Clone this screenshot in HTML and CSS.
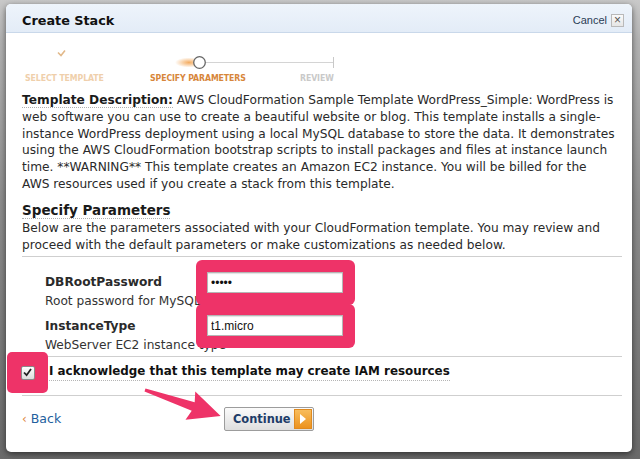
FILE: index.html
```html
<!DOCTYPE html>
<html>
<head>
<meta charset="utf-8">
<link rel="stylesheet" href="styles.css">
</head>
<body>
<div class="backdrop">
  <div class="modal">
    <header class="modal-head">
      <h1 class="title">Create Stack</h1>
      <div class="cancel">Cancel <span class="close-box">×</span></div>
    </header>
    <div class="modal-body">
      <div class="wizard">
        <svg class="track" width="312" height="22" viewBox="0 0 312 22">
          <defs>
            <linearGradient id="done" x1="0" x2="1" y1="0" y2="0">
              <stop offset="0" stop-color="#e9d2b4"/>
              <stop offset="0.8" stop-color="#e4bf92"/>
              <stop offset="1" stop-color="#f0a24a"/>
            </linearGradient>
            <radialGradient id="glow" cx="0.5" cy="0.5" r="0.5">
              <stop offset="0" stop-color="#f2a24e" stop-opacity="0.9"/>
              <stop offset="1" stop-color="#f2a24e" stop-opacity="0"/>
            </radialGradient>
          </defs>
          <path d="M33 4.5 L36 7.5 L40 2.5" fill="none" stroke="#e2b98a" stroke-width="1.6"/>
          <line x1="0" y1="14.5" x2="168" y2="14.5" stroke="url(#done)" stroke-width="1.5"/>
          <ellipse cx="164" cy="14.5" rx="14" ry="5" fill="url(#glow)"/>
          <line x1="181" y1="14.5" x2="308" y2="14.5" stroke="#d4d4d4" stroke-width="1.2"/>
          <line x1="308.5" y1="9" x2="308.5" y2="20" stroke="#c8c8c8" stroke-width="1"/>
          <circle cx="174.5" cy="14.5" r="5.8" fill="#fff" stroke="#666" stroke-width="1.3"/>
        </svg>
        <div class="steps">
          <span class="step done">SELECT TEMPLATE</span>
          <span class="step current">SPECIFY PARAMETERS</span>
          <span class="step todo">REVIEW</span>
        </div>
      </div>

      <p class="desc"><span class="term">Template Description:</span> AWS CloudFormation Sample Template WordPress_Simple: WordPress is web software you can use to create a beautiful website or blog. This template installs a single-instance WordPress deployment using a local MySQL database to store the data. It demonstrates using the AWS CloudFormation bootstrap scripts to install packages and files at instance launch time. **WARNING** This template creates an Amazon EC2 instance. You will be billed for the<br>AWS resources used if you create a stack from this template.</p>

      <h2 class="section"><span class="term">Specify Parameters</span></h2>
      <p class="intro">Below are the parameters associated with your CloudFormation template. You may review and proceed with the default parameters or make customizations as needed below.</p>

      <div class="rule"></div>

      <div class="params">
        <div class="param">
          <div class="param-text">
            <div class="param-name">DBRootPassword</div>
            <div class="param-help">Root password for MySQL</div>
          </div>
          <input class="field" type="password" value="admin">
        </div>
        <div class="param">
          <div class="param-text">
            <div class="param-name">InstanceType</div>
            <div class="param-help">WebServer EC2 instance type</div>
          </div>
          <input class="field" type="text" value="t1.micro">
        </div>
      </div>

      <div class="rule"></div>

      <label class="ack">
        <span class="check"><svg width="9" height="9" viewBox="0 0 9 9"><path d="M1 4.5 L3.6 7.2 L8 1" fill="none" stroke="#222" stroke-width="1.8"/></svg></span>
        <span class="ack-text">I acknowledge that this template may create IAM resources</span>
      </label>

      <div class="rule"></div>

      <div class="actions">
        <a class="back"><span class="chev">‹</span> Back</a>
        <button class="continue">Continue <span class="go"><svg width="8" height="10" viewBox="0 0 8 10"><path d="M1 0 L7 5 L1 10 Z" fill="#fff"/></svg></span></button>
      </div>
    </div>

    <div class="hl hl-a"></div>
    <div class="hl hl-b"></div>
    <div class="hl-inputs">
      <div class="hl-field"><input class="field" type="password" value="admin"></div>
      <div class="hl-field"><input class="field" type="text" value="t1.micro"></div>
    </div>
    <div class="hl hl-check"><span class="check"><svg width="9" height="9" viewBox="0 0 9 9"><path d="M1 4.5 L3.6 7.2 L8 1" fill="none" stroke="#222" stroke-width="1.8"/></svg></span></div>
    <svg class="arrow" width="92" height="50" viewBox="0 0 92 50">
      <polygon transform="translate(5 10) rotate(19)" points="0,-1.5 51,-4.5 48,-15 80,0 48,15 51,4.5 0,1.5" fill="#ee3368"/>
    </svg>
  </div>
</div>
</body>
</html>
```

FILE: styles.css
```css
* { box-sizing: border-box; }

html, body {
  margin: 0;
  padding: 0;
}

body {
  width: 640px;
  height: 459px;
  overflow: hidden;
  font-family: "DejaVu Sans", Verdana, sans-serif;
  color: #2a2a2a;
  background: linear-gradient(#c9c9c9 0, #b3b3b3 40px, #8e8e8e 200px, #6a6a6a 459px);
}

.backdrop {
  padding: 4px 8px 0 6px;
}

.modal {
  position: relative;
  width: 626px;
  height: 448px;
  background: #fff;
  border-radius: 5px;
  box-shadow: 0 2px 6px rgba(0, 0, 0, 0.55);
  overflow: hidden;
}

.modal-head {
  height: 29px;
  display: flex;
  align-items: center;
  justify-content: space-between;
  padding: 4px 8px 0 16px;
  background: linear-gradient(#eef4fb, #e3ecf7);
  border-bottom: 1px solid #c9d8ea;
}

.title {
  margin: 0;
  font-size: 12.8px;
  font-weight: bold;
  color: #111;
}

.cancel {
  display: flex;
  align-items: center;
  gap: 4px;
  font-family: "Liberation Sans", Arial, sans-serif;
  font-size: 11px;
  color: #2b3d55;
}

.close-box {
  display: inline-flex;
  align-items: center;
  justify-content: center;
  width: 13px;
  height: 13px;
  border: 1px solid #b9b9b9;
  background: linear-gradient(#fafafa, #e6e6e6);
  color: #555;
  font-size: 12px;
  line-height: 1;
}

.modal-body {
  padding: 0 10px 0 16px;
}

.wizard {
  padding: 15px 0 0 3px;
  height: 59px;
}

.track {
  display: block;
}

.steps {
  display: grid;
  grid-template-columns: 125px 150px auto;
  margin-top: 3px;
  font-family: "DejaVu Sans Condensed", "Liberation Sans Narrow", "Liberation Sans", sans-serif;
  font-stretch: condensed;
  font-weight: bold;
  font-size: 8.7px;
  line-height: 11px;
  letter-spacing: -0.1px;
}

.step.done { color: #efcfab; }
.step.current { color: #d7863a; }
.step.todo { color: #c9c9c9; }

.desc {
  margin: 0;
  font-size: 12.2px;
  line-height: 16.8px;
  color: #2a2a2a;
}

.term {
  font-weight: bold;
  color: #1a1a1a;
  border-bottom: 1px dotted #b0b0b0;
}

.section {
  margin: 7px 0 0;
  font-size: 13.5px;
  line-height: 20px;
  font-weight: bold;
}

.intro {
  margin: 0;
  font-size: 12.2px;
  line-height: 17px;
}

.rule {
  height: 1px;
  background: #cfcfcf;
  margin-top: 2px;
}

.params {
  padding: 15px 0 0 23px;
  display: flex;
  flex-direction: column;
  gap: 6px;
}

.param {
  display: grid;
  grid-template-columns: 163px 136px;
  align-items: start;
}

.param-name {
  font-weight: bold;
  font-size: 12.2px;
  line-height: 20px;
}

.param-help {
  font-size: 12.2px;
  line-height: 18px;
  color: #333;
  white-space: nowrap;
}

.field {
  display: block;
  width: 136px;
  height: 21px;
  margin-top: 1px;
  border: 1px solid #b5b5b5;
  box-shadow: inset 0 1px 1px rgba(0, 0, 0, 0.12);
  font-family: "Liberation Sans", Arial, sans-serif;
  font-size: 12px;
  padding: 1px 3px;
  color: #111;
  background: #fff;
}

.ack {
  display: flex;
  align-items: center;
  gap: 7px;
  padding: 4px 0 9px 6px;
  height: 36px;
}

.check {
  display: inline-flex;
  align-items: center;
  justify-content: center;
  width: 14px;
  height: 14px;
  border: 1px solid #8a8a8a;
  border-radius: 2px;
  background: linear-gradient(#ffffff, #dcdcdc);
}

.ack-text {
  font-weight: bold;
  font-size: 11.9px;
  line-height: 17px;
  color: #111;
  border-bottom: 1px dotted #b5b5b5;
}

.actions {
  display: flex;
  align-items: center;
  padding-top: 11px;
}

.back {
  font-size: 12.5px;
  color: #23609e;
  width: 202px;
}

.chev {
  color: #e0883c;
  font-size: 12px;
}

.continue {
  display: flex;
  align-items: center;
  justify-content: space-between;
  width: 90px;
  height: 24px;
  padding: 0 1px 0 8px;
  border: 1px solid #9c9c9c;
  border-radius: 2px;
  background: linear-gradient(#fbfbfb, #dedede);
  font-family: "DejaVu Sans", Verdana, sans-serif;
  font-weight: bold;
  font-size: 11.4px;
  color: #1d3c68;
}

.go {
  display: flex;
  align-items: center;
  justify-content: center;
  width: 18px;
  height: 20px;
  background: linear-gradient(#f8bd5c, #ec921e);
  border: 1px solid #e08a1e;
}

/* highlight overlays */
.hl {
  position: absolute;
  background: #ee3368;
  border-radius: 6px;
}

.hl-a { left: 190px; top: 256px; width: 159px; height: 45px; }
.hl-b { left: 190px; top: 300px; width: 159px; height: 44px; }

.hl-inputs {
  position: absolute;
  left: 201px;
  top: 268px;
  display: flex;
  flex-direction: column;
  gap: 22px;
}

.hl-field .field { margin: 0; }

.hl-check {
  left: 1px;
  top: 348px;
  width: 41px;
  height: 41px;
  display: flex;
  align-items: center;
  justify-content: center;
  border-radius: 5px;
}

.arrow {
  position: absolute;
  left: 134px;
  top: 376px;
}
```
